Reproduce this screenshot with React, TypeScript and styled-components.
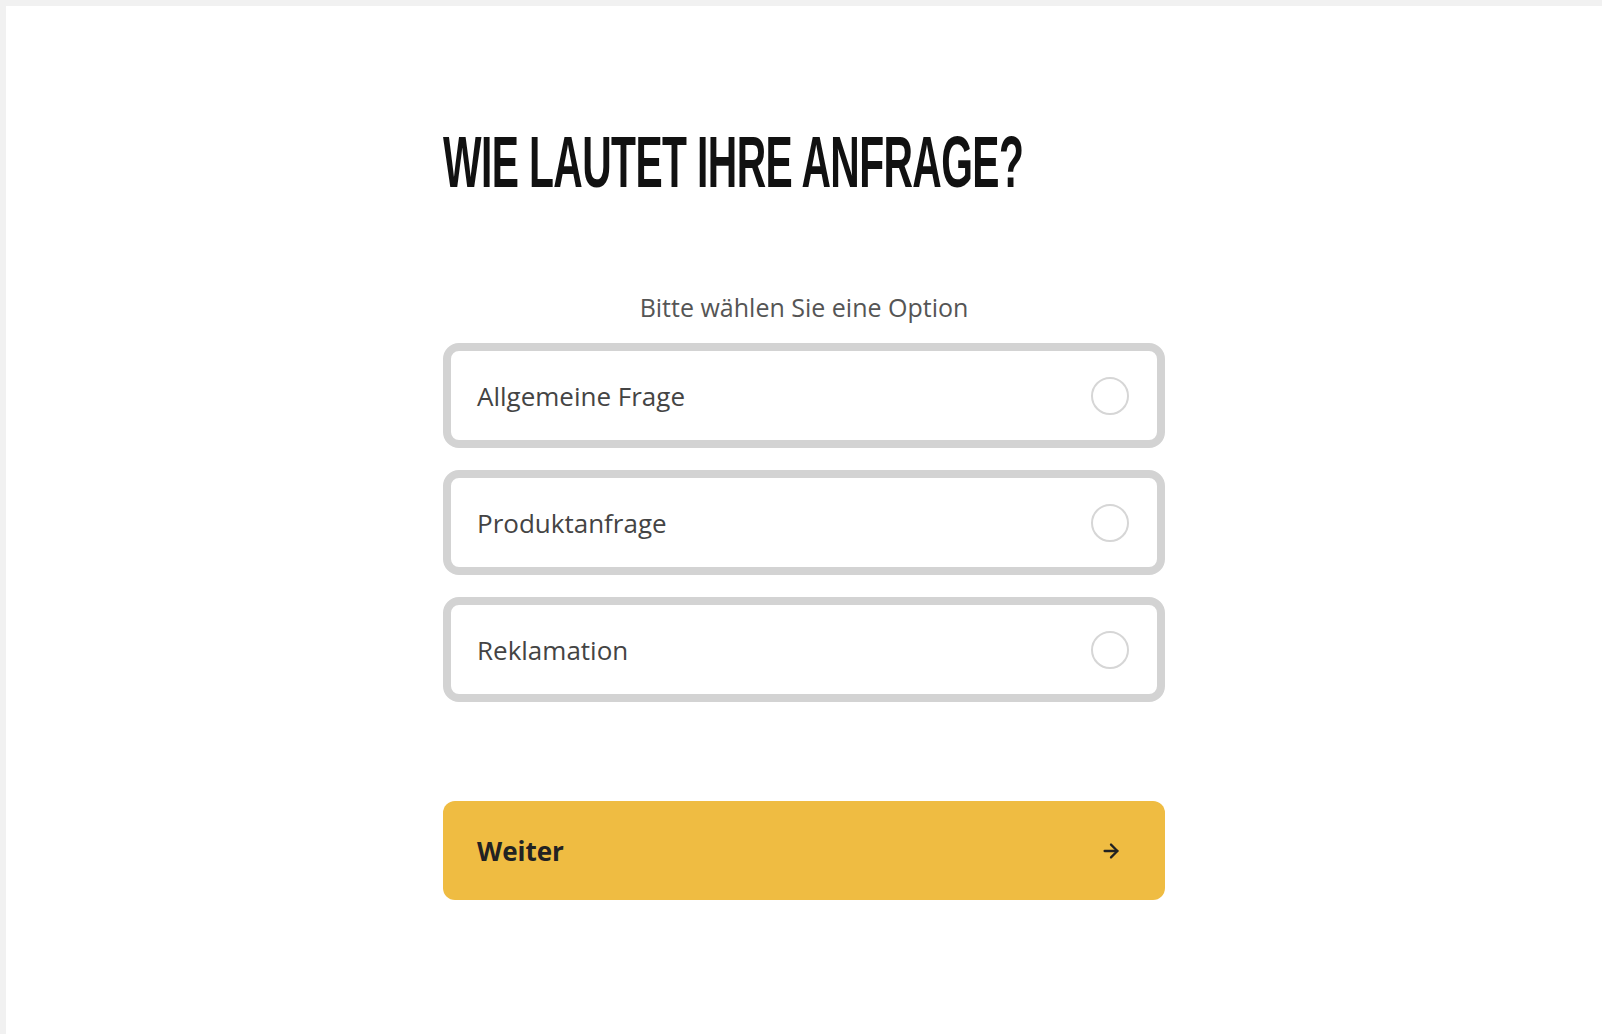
import React, { useState } from "react";
import styled, { createGlobalStyle } from "styled-components";
import { ArrowRight } from "lucide-react";

const GlobalStyle = createGlobalStyle`
  html, body {
    margin: 0;
    padding: 0;
    background: #f1f1f1;
  }
  * {
    box-sizing: border-box;
  }
`;

const Page = styled.div`
  margin: 6px 0 0 6px;
  min-height: calc(100vh - 6px);
  background: #ffffff;
  display: flex;
  justify-content: center;
  font-family: "Open Sans", "Liberation Sans", sans-serif;
`;

const Form = styled.form`
  width: 722px;
  display: flex;
  flex-direction: column;
  padding-top: 116px;
`;

const Title = styled.h1`
  margin: 0;
  font-family: "Liberation Sans", Arial, sans-serif;
  font-weight: 900;
  font-size: 72px;
  line-height: 80px;
  color: #111111;
  white-space: nowrap;
  transform: scaleX(0.566);
  transform-origin: left center;
  letter-spacing: -1px;
`;

const Hint = styled.p`
  margin: 89px 0 20px;
  text-align: center;
  font-size: 25px;
  line-height: 32px;
  color: #555555;
`;

const Options = styled.div`
  display: flex;
  flex-direction: column;
  gap: 22px;
`;

const Option = styled.label<{ $active: boolean }>`
  height: 105px;
  display: flex;
  align-items: center;
  justify-content: space-between;
  padding: 0 28px 0 26px;
  border: 8px solid ${({ $active }) => ($active ? "#efbc42" : "#d3d3d3")};
  border-radius: 16px;
  background: #ffffff;
  cursor: pointer;
  font-size: 26px;
  color: #444444;
`;

const Radio = styled.span<{ $active: boolean }>`
  width: 38px;
  height: 38px;
  border-radius: 50%;
  border: 2px solid #d6d6d6;
  background: ${({ $active }) => ($active ? "#efbc42" : "#ffffff")};
`;

const NextButton = styled.button`
  margin-top: 99px;
  height: 99px;
  display: flex;
  align-items: center;
  justify-content: space-between;
  padding: 0 43px 0 34px;
  border: none;
  border-radius: 12px;
  background: #efbc42;
  color: #222222;
  font-family: "Open Sans", "Liberation Sans", sans-serif;
  font-size: 26px;
  font-weight: 700;
  cursor: pointer;
`;

const options = ["Allgemeine Frage", "Produktanfrage", "Reklamation"];

const App = () => {
  const [selected, setSelected] = useState<string | null>(null);

  return (
    <>
      <GlobalStyle />
      <Page>
        <Form onSubmit={(e) => e.preventDefault()}>
          <Title>WIE LAUTET IHRE ANFRAGE?</Title>
          <Hint>Bitte wählen Sie eine Option</Hint>
          <Options>
            {options.map((option) => (
              <Option
                key={option}
                $active={selected === option}
                onClick={() => setSelected(option)}
              >
                {option}
                <Radio $active={selected === option} />
              </Option>
            ))}
          </Options>
          <NextButton type="submit">
            Weiter
            <ArrowRight size={22} strokeWidth={2.5} />
          </NextButton>
        </Form>
      </Page>
    </>
  );
};

export default App;
